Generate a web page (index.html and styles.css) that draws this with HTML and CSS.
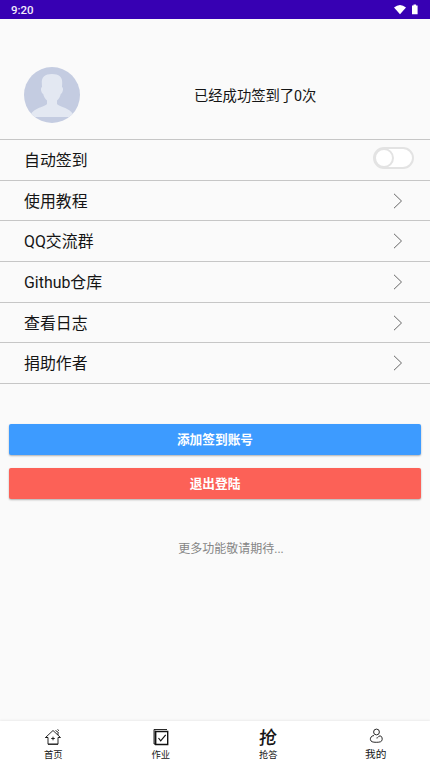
FILE: index.html
```html
<!DOCTYPE html>
<html lang="zh-CN">
<head>
<meta charset="utf-8">
<title>我的</title>
<link rel="stylesheet" href="styles.css">
</head>
<body>
<div class="screen">
  <header class="status">
    <span>9:20</span>
    <svg class="status-icons" width="26" height="12" viewBox="0 0 26 12" fill="#fff"><path d="M0 3.4Q6-1.6 12 3.4L6 10.3Z"/><path d="M18 1.6h1.5V.4h2.6v1.2h1.5v8.7H18Z"/></svg>
  </header>
  <main>
    <section class="profile">
      <svg class="avatar" viewBox="0 0 56 56">
        <defs><clipPath id="circle"><circle cx="28" cy="28" r="28"/></clipPath></defs>
        <g clip-path="url(#circle)">
          <path fill="#c4cce1" d="M0 0h56v56H0z"/>
          <path fill="#e3e8f2" d="M28 7c7 0 10.500 3 10.200 9l-.2 4c2 1 .8 6-1.200 7-.7 3-2 5-3.800 6.600V37c2 3 14.500 3.500 17 12.500V50H6v-.5C8.500 40.500 21 40 23 37v-3.400c-1.800-1.600-3.100-3.600-3.800-6.600-2-1-3.200-6-1.200-7l-.2-4C17.500 10 21 7 28 7Z"/>
        </g>
      </svg>
      <p class="count">已经成功签到了0次</p>
    </section>
    <ul class="menu">
      <li><span class="label">自动签到</span><span class="switch"></span></li>
      <li><span class="label">使用教程</span><svg class="arrow" viewBox="0 0 10 16"><path d="M1 .8 8.500 8 1 15.200"/></svg></li>
      <li><span class="label">QQ交流群</span><svg class="arrow" viewBox="0 0 10 16"><path d="M1 .8 8.500 8 1 15.200"/></svg></li>
      <li><span class="label">Github仓库</span><svg class="arrow" viewBox="0 0 10 16"><path d="M1 .8 8.500 8 1 15.200"/></svg></li>
      <li><span class="label">查看日志</span><svg class="arrow" viewBox="0 0 10 16"><path d="M1 .8 8.500 8 1 15.200"/></svg></li>
      <li><span class="label">捐助作者</span><svg class="arrow" viewBox="0 0 10 16"><path d="M1 .8 8.500 8 1 15.200"/></svg></li>
    </ul>
    <div class="actions">
      <button class="btn add">添加签到账号</button>
      <button class="btn exit">退出登陆</button>
    </div>
    <p class="more">更多功能敬请期待...</p>
  </main>
  <nav class="tabs">
    <a class="tab"><svg class="icon" viewBox="0 0 20 20"><path d="M2.500 10.500 10 3.500l7.500 7H15v6.700H5v-6.700ZM12.500 3.500l3 2M14.500 2.500l1.500 1.200M15 5.500v2.500"/><path d="M2.500 10.500H5M10 9.700v3.600M8.200 11.500h3.600M5 17.200h10"/></svg><span>首页</span></a>
    <a class="tab"><svg class="icon" viewBox="0 0 20 20"><path d="M3 17V2.500h13M3 17h2M4 3.500v14"/><path class="heavy" d="M4.700 4.500h12v13h-12Z"/><path class="check" d="m7.500 11 2.200 2.800 5-6"/></svg><span>作业</span></a>
    <a class="tab"><span class="icon brush">抢</span><span>抢答</span></a>
    <a class="tab current"><svg class="icon" viewBox="0 0 20 20"><circle cx="10.500" cy="5" r="2.900"/><path d="M8 8.500C5 9 4.300 10.800 4.400 12.500c.3 2.300 2.300 2.800 5.900 2.800s5.800-.5 5.900-3c0-2-.8-3.500-2.300-3.400-1.600.2-1.500 2.100-3.400 2.100"/></svg><span>我的</span></a>
  </nav>
</div>
</body>
</html>
```
FILE: styles.css
```css
*, *::before { box-sizing: border-box; }
body { margin: 0; background: #fafafa; color: #151515; font-family: Roboto, "Noto Sans CJK SC", sans-serif; }
p, ul { margin: 0; padding: 0; }
.screen { width: 430px; height: 766px; display: flex; flex-direction: column; overflow: hidden; }
.status { height: 19px; flex: none; display: flex; align-items: center; justify-content: space-between; padding: 0 10px 0 11px; background: #3700b3; color: #f1eafa; font-size: 11.500px; font-weight: 500; line-height: 19px; }
.status span { padding-top: 1px; }
main { flex: 1; }
.profile { height: 120px; display: flex; align-items: center; padding: 32px 0 0 24px; }
.avatar { width: 56px; height: 56px; display: block; }
.count { margin: 2px 0 0 114px; font-size: 14.300px; line-height: 20px; }
.menu { list-style: none; border-top: 1px solid #c6c6c6; }
.menu li { height: 40.700px; display: flex; align-items: center; justify-content: space-between; padding: 0 16px 0 24px; border-bottom: 1px solid #c6c6c6; font-size: 15.900px; }
.label { padding-bottom: 1px; }
.switch { width: 41px; height: 22px; display: flex; border: 2px solid #e3e3e3; border-radius: 11px; background: #fff; margin-top: -3px; }
.switch::before { content: ""; width: 20px; height: 20px; margin: -1px; border: 2px solid #e3e3e3; border-radius: 50%; }
.arrow { width: 10px; height: 16px; margin: 0 11px 0 0; fill: none; stroke: #666; stroke-width: 1; }
.actions { display: flex; flex-direction: column; gap: 13px; padding: 40px 9px 0; }
.btn { height: 31px; border: 0; padding: 0; border-radius: 2px; color: #fff; font: 700 12.700px/31px Roboto, "Noto Sans CJK SC", sans-serif; box-shadow: 0 1px 2px rgba(0, 0, 0, .3); }
.add { background: #3d9bff; }
.exit { background: #fc6157; }
.more { margin: 41px 0 0 32px; text-align: center; font-size: 12px; line-height: 18px; color: #858585; }
.tabs { height: 45px; flex: none; display: flex; background: #fff; box-shadow: 0 -1px 2px rgba(0, 0, 0, .06); }
.tab { flex: 1; display: flex; flex-direction: column; align-items: center; padding: 6px 1px 0 0; font-size: 9.300px; line-height: 15px; }
.current { font-size: 10.700px; }
.icon { width: 20px; height: 20px; flex: none; fill: none; stroke: #111; stroke-width: .9; }
.heavy { stroke-width: 1.400; }
.check { stroke-width: 1.200; }
.brush { font-size: 18px; font-weight: 500; line-height: 20px; text-align: center; transform: translateY(1px) rotate(-4deg) skewX(-8deg); }
```
